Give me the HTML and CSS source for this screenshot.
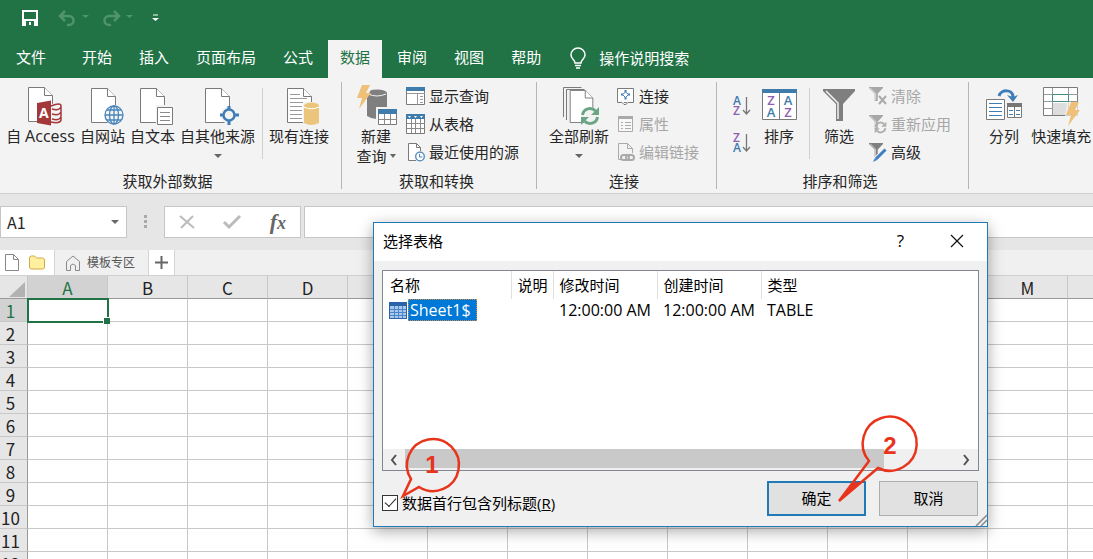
FILE: index.html
```html
<!DOCTYPE html>
<html lang="zh-CN">
<head>
<meta charset="utf-8">
<title>Excel</title>
<link rel="stylesheet" href="styles.css">
</head>
<body>
<svg class="defs" aria-hidden="true">
  <symbol id="doc" viewBox="0 0 25 35"><path d="M.5.500h16l8 8v26H.5z" fill="#fff" stroke="#7a7a7a"/><path d="M16.500.500v8h8" fill="#fff" stroke="#7a7a7a"/></symbol>
  <symbol id="bolt" viewBox="0 0 14 24"><path d="M5 0h8L9 8h5L2 24 5 13H0z" fill="#eec078"/></symbol>
  <symbol id="cycle" viewBox="0 0 20 20"><path d="M2.500 9a7.500 7.500 0 0 1 13-4M17.500 11a7.500 7.500 0 0 1-13 4" fill="none" stroke="currentColor" stroke-width="3"/><path d="M19 1v8h-8zM1 19v-8h8z" fill="currentColor"/></symbol>
  <symbol id="funnel" viewBox="0 0 32 32"><path d="M0 0h32v2L20 15v17h-7V15L0 2z" fill="#7f7f7f"/><path d="M3 2l12 12v16" fill="none" stroke="#f3f3f3" stroke-width="1.500"/></symbol>
</svg>

<div class="app">
  <header class="titlebar">
    <button class="qat save" aria-label="保存"><svg width="16" height="16"><path d="M0 0h16v16H0z" fill="#fff"/><path d="M2 2h12v7H2zM4 11h8v5H4z" fill="#217346"/><path d="M7 12h2v3H7z" fill="#fff"/></svg></button>
    <button class="qat undo" aria-label="撤销"><svg width="32" height="16"><path d="M7 1L2 6l5 5M2 6h9a4 4 0 0 1 0 9h-2" fill="none" stroke="#4f946d" stroke-width="2.500"/><path d="M24 5h7l-3.500 3z" fill="#4f946d"/></svg></button>
    <button class="qat redo" aria-label="恢复"><svg width="32" height="16"><path d="M12 1l5 5-5 5M17 6H7a4 4 0 0 0 0 9h2" fill="none" stroke="#4f946d" stroke-width="2.500"/><path d="M24 5h7l-3.500 3z" fill="#4f946d"/></svg></button>
    <button class="qat" aria-label="自定义快速访问工具栏"><svg width="7" height="8"><path d="M1 1h5" stroke="#fff"/><path d="M0 4h7L3.500 7z" fill="#fff"/></svg></button>
  </header>

  <nav class="tabs">
    <button class="tab file">文件</button>
    <button class="tab">开始</button>
    <button class="tab">插入</button>
    <button class="tab">页面布局</button>
    <button class="tab">公式</button>
    <button class="tab active">数据</button>
    <button class="tab">审阅</button>
    <button class="tab">视图</button>
    <button class="tab">帮助</button>
    <button class="tell"><svg width="16" height="21"><path d="M5 15c0-3-4-4-4-8a7 7 0 0 1 14 0c0 4-4 5-4 8z" fill="none" stroke="#fff" stroke-width="1.500"/><path d="M5 17.500h6M6 20h4" stroke="#fff" stroke-width="1.500"/></svg>操作说明搜索</button>
  </nav>

  <section class="ribbon">
    <div class="group near">
      <div class="controls">
        <button class="large access"><svg width="44" height="42"><use href="#doc" x="9" y="3" width="25" height="35"/><path d="M29 20h11q4 0 4 3v13q0 4-5 4H29z" fill="#f3f3f3"/><g fill="none" stroke="#a4373a" stroke-width="1.500"><path d="M32 22q10-4 10 0v14q-1 4-10 2M33 25q7 2 9-2M33 30q7 2 9-2M33 35q7 2 9-2"/></g><path d="M18 19l14-2.500v25L18 39z" fill="#a4373a"/><text x="20" y="34" font-size="14" font-weight="700" fill="#fff">A</text></svg><span>自 <span class="latin">Access</span></span></button>
        <button class="large"><svg width="44" height="42"><use href="#doc" x="10" y="4" width="25" height="35"/><circle cx="33" cy="31" r="10" fill="#f3f3f3"/><g fill="none" stroke="#4a86bd" stroke-width="1.300"><circle cx="33" cy="31" r="9"/><ellipse cx="33" cy="31" rx="4.500" ry="9"/><path d="M33 22v18M24 31h18M26 26h14M26 36h14"/></g></svg><span>自网站</span></button>
        <button class="large"><svg width="44" height="42"><use href="#doc" x="9" y="4" width="25" height="35"/><path d="M25 21h17v20H25z" fill="#f3f3f3"/><path d="M26.500 23.500h15v17h-15z" fill="#fff" stroke="#7a7a7a"/><path d="M29 28.500h10M29 32.500h10M29 36.500h10" stroke="#8a8a8a"/></svg><span>自文本</span></button>
        <button class="large"><svg width="44" height="42"><use href="#doc" x="9" y="4" width="25" height="35"/><circle cx="33" cy="31" r="9" fill="#f3f3f3"/><circle cx="33" cy="31" r="5.500" fill="#f3f3f3" stroke="#3e7db8" stroke-width="2.500"/><path d="M33 22v4M33 36v5M24 31h4M38 31h5" stroke="#3e7db8" stroke-width="3"/></svg><span>自其他来源</span><i class="arrow"></i></button>
        <div class="rule"></div>
        <button class="large"><svg width="44" height="42"><use href="#doc" x="10" y="4" width="25" height="35"/><path d="M13 10.500h10M13 14.500h17M13 18.500h15M13 22.500h12M13 26.500h12M13 30.500h12M13 34.500h12" stroke="#999"/><path d="M26 18h17v23H26z" fill="#f3f3f3"/><path d="M27 22v17q7 4 15 0V22z" fill="#ecc57c"/><ellipse cx="34.500" cy="21.500" rx="7.500" ry="3" fill="#ecc57c"/><path d="M27 23q7 3.500 15 0" fill="none" stroke="#fff"/></svg><span>现有连接</span></button>
      </div>
      <div class="caption">获取外部数据</div>
    </div>

    <div class="group">
      <div class="controls">
        <button class="large"><svg width="44" height="42"><path d="M13 9v23q9 6 20 0V9z" fill="#7f7f7f"/><ellipse cx="23" cy="9" rx="10" ry="3.500" fill="#7f7f7f"/><path d="M14 10q9 4 18 0" fill="none" stroke="#f3f3f3"/><path d="M13 3h5L9 22l-1-6z" fill="#f3f3f3"/><use href="#bolt" x="3" y="1" width="14" height="24"/><path d="M22 23h22v19H22z" fill="#f3f3f3"/><path d="M24.500 25.500h18v15h-18z" fill="#fff" stroke="#7a7a7a"/><path d="M24 25h19v5H24z" fill="#3f7cac"/><path d="M30.500 30v11M36.500 30v11M25 35.500h18" stroke="#8a8a8a"/></svg><span>新建</span><span class="second">查询<i class="arrow inline"></i></span></button>
        <div class="stack">
          <button class="small"><svg width="19" height="20"><path d="M.5 1.500h18v17H.5z" fill="#fff" stroke="#7a7a7a"/><path d="M0 1h19v4H0z" fill="#3f7cac"/><path d="M1 7.500h18M11.500 8v11M14 10.500h3M14 13.500h3M14 16.500h3" stroke="#999"/></svg>显示查询</button>
          <button class="small"><svg width="19" height="20"><path d="M.5 1.500h18v18H.5z" fill="#fff" stroke="#7a7a7a"/><path d="M0 0h19v5H0z" fill="#3f7cac"/><path d="M2 2h3L3.500 4zM8 2h3L9.500 4zM14 2h3l-1.500 2z" fill="#fff"/><path d="M5.500 5v14M9.500 5v14M14.500 5v14M1 9.500h18M1 14.500h18" stroke="#8a8a8a"/></svg>从表格</button>
          <button class="small"><svg width="19" height="20"><path d="M2.500 1.500h8l4 4v13h-12z" fill="#fff" stroke="#7a7a7a"/><path d="M10.500 1.500v4h4" fill="none" stroke="#7a7a7a"/><circle cx="14" cy="14.500" r="5.500" fill="#f3f3f3"/><circle cx="14" cy="14.500" r="4.300" fill="#fff" stroke="#4a86bd" stroke-width="1.300"/><path d="M13.500 12v3h3" fill="none" stroke="#4a86bd"/></svg>最近使用的源</button>
        </div>
      </div>
      <div class="caption">获取和转换</div>
    </div>

    <div class="group">
      <div class="controls">
        <button class="large"><svg width="44" height="42"><path d="M6.500 33V3.500h18M9.500 36V5.500h18" fill="none" stroke="#7a7a7a"/><use href="#doc" x="12" y="6" width="25" height="33"/><circle cx="33" cy="32" r="9" fill="#f3f3f3"/><g color="#6ba585"><use href="#cycle" x="23" y="22" width="20" height="20"/></g></svg><span>全部刷新</span><i class="arrow"></i></button>
        <div class="stack">
          <button class="small"><svg width="18" height="20"><path d="M.5 2.500h16v14H.5z" fill="#fff" stroke="#7a7a7a"/><path d="M8.500 4v2.500M8.500 11v2.500M4 8.500h2M11 8.500h2" stroke="#3e7db8" stroke-width="2"/><path d="M8.500 6l3 2.500-3 3-3-3z" fill="#fff" stroke="#3e7db8"/><path d="M2 16.500h5M10 16.500h5" stroke="#f3f3f3" stroke-width="4"/><path d="M1 16.500h4l2 2h2l2-2h5" fill="none" stroke="#7a7a7a"/></svg>连接</button>
          <button class="small" disabled><svg width="18" height="20"><path d="M1.500 2.500h14v15h-14z" fill="#f8f8f8" stroke="#aaa"/><path d="M1 2h15v3H1z" fill="#aaa"/><path d="M4 8.500h2M8 8.500h6M4 11.500h2M8 11.500h6M4 14.500h2M8 14.500h6" stroke="#aaa"/></svg>属性</button>
          <button class="small" disabled><svg width="18" height="20"><path d="M4 17.500H1.500v-16h9l5 5V11M10.500 1.500v5h5" fill="none" stroke="#aaa"/><rect x="4" y="13" width="8" height="5" rx="2.500" fill="none" stroke="#aaa" stroke-width="2"/><rect x="9" y="13" width="8" height="5" rx="2.500" fill="none" stroke="#aaa" stroke-width="2"/></svg>编辑链接</button>
        </div>
      </div>
      <div class="caption">连接</div>
    </div>

    <div class="group">
      <div class="controls">
        <div class="sorts">
          <button aria-label="升序"><svg width="20" height="22"><g font-size="12" font-weight="600"><text x="4" y="10" fill="#3f7cac">A</text><text x="4" y="20" fill="#8e5fb0">Z</text></g><path d="M17.500 2v16M14 15l3.500 4 3.500-4" fill="none" stroke="#777" stroke-width="1.300"/></svg></button>
          <button aria-label="降序"><svg width="20" height="22"><g font-size="12" font-weight="600"><text x="4" y="10" fill="#8e5fb0">Z</text><text x="4" y="20" fill="#3f7cac">A</text></g><path d="M17.500 2v16M14 15l3.500 4 3.500-4" fill="none" stroke="#777" stroke-width="1.300"/></svg></button>
        </div>
        <button class="large"><svg width="44" height="42"><path d="M5.500 5.500h34v30h-34z" fill="#fff" stroke="#7a7a7a"/><path d="M5 5h35v4H5z" fill="#3f7cac"/><path d="M22.500 9v26" stroke="#7a7a7a"/><g font-size="13" font-weight="600" text-anchor="middle"><text x="14" y="21" fill="#8e5fb0">Z</text><text x="14" y="33" fill="#3f7cac">A</text><text x="31" y="21" fill="#3f7cac">A</text><text x="31" y="33" fill="#8e5fb0">Z</text></g></svg><span>排序</span></button>
        <div class="rule tight"></div>
        <button class="large"><svg width="44" height="42"><use href="#funnel" x="6" y="5" width="32" height="32"/></svg><span>筛选</span></button>
        <div class="stack">
          <button class="small" disabled><svg width="18" height="20"><g opacity=".65"><use href="#funnel" x="0" y="1" width="14" height="14"/></g><path d="M10 10l7 8M17 10l-7 8" stroke="#aaa" stroke-width="2"/></svg>清除</button>
          <button class="small" disabled><svg width="18" height="20"><g opacity=".65"><use href="#funnel" x="0" y="1" width="14" height="14"/></g><g color="#b0b0b0"><use href="#cycle" x="5" y="7" width="13" height="13"/></g></svg>重新应用</button>
          <button class="small"><svg width="18" height="20"><use href="#funnel" x="0" y="1" width="14" height="14"/><path d="M6 18l10-10" stroke="#f3f3f3" stroke-width="5"/><path d="M7 17l9.500-9.500" stroke="#3f7cc0" stroke-width="3"/><path d="M4 20l2-4 2 2z" fill="#3f7cc0"/></svg>高级</button>
        </div>
      </div>
      <div class="caption">排序和筛选</div>
    </div>

    <div class="group near last">
      <div class="controls">
        <button class="large"><svg width="44" height="42"><path d="M4.500 15.500h18v20h-18z" fill="#fff" stroke="#7a7a7a"/><path d="M7 19.500h13M7 23.500h13M7 27.500h13M7 31.500h13" stroke="#3e7db8"/><path d="M25.500 19.500h14v14h-14z" fill="#fff" stroke="#7a7a7a"/><path d="M25 19h15v4H25z" fill="#777"/><path d="M32.500 23v11" stroke="#777"/><path d="M27 26.500h4M27 30.500h4M34 26.500h4M34 30.500h4" stroke="#3e7db8"/><path d="M17 12c2-7 14-7 14 1" fill="none" stroke="#3e7db8" stroke-width="3"/><path d="M25 11l6 7 5-7-5 2z" fill="#3e7db8"/></svg><span>分列</span></button>
        <button class="large"><svg width="44" height="42"><path d="M4.500 3.500h34v28h-34z" fill="#fff" stroke="#7a7a7a"/><path d="M13 19h17v12H13z" fill="#ddd"/><path d="M13.500 4v27M29.500 4v27M5 10.500h34M5 17.500h34M5 24.500h8" stroke="#999"/><path d="M13.500 10.500h16v7h-16z" fill="#fff" stroke="#448d83"/><path d="M28 18h14v14H26z" fill="#f3f3f3" opacity=".7"/><use href="#bolt" x="27" y="18" width="14" height="24"/></svg><span>快速填充</span></button>
      </div>
    </div>
  </section>

  <section class="formulabar">
    <div class="namebox"><input aria-label="名称框" value="A1"><button aria-label="名称列表"><i class="arrow"></i></button></div>
    <svg class="grip" width="3" height="14"><path d="M0 0h3v3H0zM0 5h3v3H0zM0 10h3v3H0z" fill="#aaa"/></svg>
    <div class="fxbox">
      <button aria-label="取消输入"><svg width="16" height="14"><path d="M1 1l14 12M14 1L2 13" stroke="#bbb" stroke-width="2"/></svg></button>
      <button aria-label="输入"><svg width="18" height="14"><path d="M1 7l5 5L17 1" fill="none" stroke="#bbb" stroke-width="3"/></svg></button>
      <button class="fx" aria-label="插入函数">f<small>x</small></button>
    </div>
    <input class="formula" aria-label="编辑栏">
  </section>

  <section class="filetabs">
    <div class="quick">
      <button aria-label="新建"><svg width="14" height="17"><path d="M.5.500h8l5 5v11H.5zM8.500.500v5h5" fill="#fff" stroke="#888"/></svg></button>
      <button aria-label="打开"><svg width="18" height="15"><path d="M1.500 3q0-2 2-2h3l2 2h6q2 0 2 2v7q0 2-2 2h-11q-2 0-2-2z" fill="#fff0a0" stroke="#d2aa48"/></svg></button>
    </div>
    <button class="filetab"><svg width="16" height="16"><path d="M1.500 15.500v-9L8 1l6.500 5.500v9h-4v-5q-2.500-3-5 0v5z" fill="none" stroke="#888"/></svg>模板专区</button>
    <button class="plus" aria-label="新标签"><svg width="13" height="13"><path d="M6.500 0v13M0 6.500h13" stroke="#666" stroke-width="2"/></svg></button>
  </section>

  <main class="sheet">
    <table class="grid">
      <thead><tr><th class="corner"><svg width="16" height="15"><path d="M16 0v15H0z" fill="#b2b2b2"/></svg></th><th class="sel">A</th><th>B</th><th>C</th><th>D</th><th></th><th></th><th></th><th></th><th></th><th></th><th></th><th></th><th>M</th><th></th></tr></thead>
      <tbody>
        <tr><th class="sel">1</th><td class="cursor"></td><td></td><td></td><td></td><td></td><td></td><td></td><td></td><td></td><td></td><td></td><td></td><td></td><td></td></tr>
        <tr><th>2</th><td></td><td></td><td></td><td></td><td></td><td></td><td></td><td></td><td></td><td></td><td></td><td></td><td></td><td></td></tr>
        <tr><th>3</th><td></td><td></td><td></td><td></td><td></td><td></td><td></td><td></td><td></td><td></td><td></td><td></td><td></td><td></td></tr>
        <tr><th>4</th><td></td><td></td><td></td><td></td><td></td><td></td><td></td><td></td><td></td><td></td><td></td><td></td><td></td><td></td></tr>
        <tr><th>5</th><td></td><td></td><td></td><td></td><td></td><td></td><td></td><td></td><td></td><td></td><td></td><td></td><td></td><td></td></tr>
        <tr><th>6</th><td></td><td></td><td></td><td></td><td></td><td></td><td></td><td></td><td></td><td></td><td></td><td></td><td></td><td></td></tr>
        <tr><th>7</th><td></td><td></td><td></td><td></td><td></td><td></td><td></td><td></td><td></td><td></td><td></td><td></td><td></td><td></td></tr>
        <tr><th>8</th><td></td><td></td><td></td><td></td><td></td><td></td><td></td><td></td><td></td><td></td><td></td><td></td><td></td><td></td></tr>
        <tr><th>9</th><td></td><td></td><td></td><td></td><td></td><td></td><td></td><td></td><td></td><td></td><td></td><td></td><td></td><td></td></tr>
        <tr><th>10</th><td></td><td></td><td></td><td></td><td></td><td></td><td></td><td></td><td></td><td></td><td></td><td></td><td></td><td></td></tr>
        <tr><th>11</th><td></td><td></td><td></td><td></td><td></td><td></td><td></td><td></td><td></td><td></td><td></td><td></td><td></td><td></td></tr>
        <tr><th>12</th><td></td><td></td><td></td><td></td><td></td><td></td><td></td><td></td><td></td><td></td><td></td><td></td><td></td><td></td></tr>
      </tbody>
    </table>
  </main>
</div>

<div class="dialog" role="dialog" aria-labelledby="dlg-title">
  <div class="dlg-head">
    <h1 id="dlg-title">选择表格</h1>
    <button class="help" aria-label="帮助">?</button>
    <button class="close" aria-label="关闭"><svg width="14" height="14"><path d="M1 1l12 12M13 1L1 13" stroke="#111" stroke-width="1.200"/></svg></button>
  </div>
  <div class="dlg-body">
    <div class="list">
      <table class="sources">
        <colgroup><col class="c-name"><col class="c-desc"><col class="c-time"><col class="c-time"><col></colgroup>
        <thead><tr><th>名称</th><th>说明</th><th>修改时间</th><th>创建时间</th><th>类型</th></tr></thead>
        <tbody><tr><td class="name"><div class="entry"><svg width="18" height="17"><path d="M0 0h18v17H0z" fill="#2c62a8"/><path d="M1 4h16v12H1z" fill="#a9c8ec"/><path d="M5.500 4v12M9.500 4v12M13.500 4v12M1 7.500h16M1 10.500h16M1 13.500h16" stroke="#4d86c8"/></svg><span class="picked">Sheet1$</span></div></td><td></td><td>12:00:00 AM</td><td>12:00:00 AM</td><td>TABLE</td></tr></tbody>
      </table>
      <div class="scroll">
        <button aria-label="向左滚动"><svg width="8" height="12"><path d="M6 1L2 6l4 5" fill="none" stroke="#505050" stroke-width="2"/></svg></button>
        <div class="track"><div class="thumb"></div></div>
        <button aria-label="向右滚动"><svg width="8" height="12"><path d="M1 1l4 5-4 5" fill="none" stroke="#505050" stroke-width="2"/></svg></button>
      </div>
    </div>
    <div class="dlg-foot">
      <label class="check"><input type="checkbox" checked><span>数据首行包含列标题(<u>R</u>)</span></label>
      <button class="btn primary">确定</button>
      <button class="btn">取消</button>
    </div>
  </div>
  <svg class="resize" width="12" height="12"><path d="M1 12L12 1M6 12l6-6" stroke="#888" stroke-width="1.500"/></svg>
  <svg class="callout one" width="62" height="64"><path d="M12 42A26 26 0 1 1 20 50L4 59z" fill="none" stroke="#e8341c" stroke-width="2.500"/><text x="33" y="36" text-anchor="middle">1</text></svg>
  <svg class="callout two" width="86" height="90"><path d="M34 45A27 27 0 1 1 43 52L4 85z" fill="none" stroke="#e8341c" stroke-width="2.500"/><path d="M4 85l13-18 8-1z" fill="#e8341c"/><text x="55" y="38" text-anchor="middle">2</text></svg>
</div>
</body>
</html>
```

FILE: styles.css
```css
* { box-sizing: border-box; }

body {
  margin: 0;
  font: 15px/20px "Open Sans", "Noto Sans CJK SC", sans-serif;
  color: #262626;
  background: #fff;
}

button, input {
  font: inherit;
  color: inherit;
  margin: 0;
  padding: 0;
  border: 0;
  background: none;
}

button { white-space: nowrap; }
svg { display: block; flex: none; overflow: visible; }
.defs { position: absolute; width: 0; height: 0; }

.app {
  height: 100vh;
  display: flex;
  flex-direction: column;
  overflow: hidden;
}

.arrow {
  display: block;
  border: 4px solid transparent;
  border-top-color: #666;
  border-bottom: 0;
}

/* Title bar and tabs */
.titlebar {
  flex: none;
  height: 40px;
  padding: 0 22px 4px;
  display: flex;
  align-items: center;
  background: #217346;
}
.qat.save { margin-right: 20px; }
.qat.undo { margin-right: 12px; }
.qat.redo { margin-right: 18px; }

.tabs {
  flex: none;
  height: 38px;
  padding: 0 4px;
  display: flex;
  gap: 3px;
  background: #217346;
  color: #fff;
}
.tab { padding: 0 12px 4px; }
.tab.file { margin-right: 9px; }
.tab.active { background: #f3f3f3; color: #217346; }
.tell {
  display: flex;
  align-items: center;
  gap: 13px;
  margin-left: 14px;
  padding-bottom: 2px;
}

/* Ribbon */
.ribbon {
  flex: none;
  display: flex;
  background: #f3f3f3;
  border-bottom: 1px solid #d0d0d0;
}
.group {
  flex: none;
  display: flex;
  flex-direction: column;
  margin: 4px 0;
  padding: 0 17px 0 12px;
  border-right: 1px solid #b5b5b5;
}
.group.near { padding: 0 12px 0 6px; }
.group.last { padding-left: 13px; border: 0; }
.controls { display: flex; gap: 8px; height: 91px; }
.near .controls { gap: 5px; }
.caption { line-height: 16px; text-align: center; }
.large {
  display: flex;
  flex-direction: column;
  align-items: center;
  padding-top: 2px;
}
.large.access { width: 69px; }
.latin { font-size: 16px; }
.large .arrow { margin-top: 8px; }
.large .second { display: flex; align-items: center; gap: 3px; }
.large .arrow.inline { margin: 0; border-width: 4px 3px 0; }
.rule { width: 1px; height: 71px; margin: 6px 1px 0 2px; background: #d0d0d0; }
.rule.tight { margin: 6px -1px 0 0; }
.stack { display: flex; flex-direction: column; }
.small {
  display: flex;
  align-items: center;
  gap: 4px;
  height: 28px;
}
.small:disabled { color: #a6a6a6; }
.sorts { display: flex; flex-direction: column; padding-top: 5px; }
.sorts button { height: 37px; }

/* Formula bar */
.formulabar {
  flex: none;
  display: flex;
  align-items: center;
  padding: 12px 0;
  background: #e6e6e6;
}
.namebox, .fxbox, .formula {
  height: 32px;
  background: #fff;
  border: 1px solid #c6c6c6;
}
.namebox {
  width: 127px;
  display: flex;
  align-items: center;
  padding: 0 7px 0 6px;
}
.namebox input { flex: 1; min-width: 0; font: 16px/20px "Noto Sans CJK SC", sans-serif; }
.grip { margin: 0 17px; }
.fxbox {
  width: 137px;
  display: flex;
  align-items: center;
  justify-content: space-between;
  padding: 0 14px;
  margin-right: 3px;
}
.fx { font: italic 700 22px/24px "Liberation Serif", serif; color: #666; }
.fx small { font-size: 18px; }
.formula { flex: 1; min-width: 0; border-right: 0; }

/* Document tabs */
.filetabs {
  flex: none;
  display: flex;
  height: 25px;
  background: #f0f0f0;
}
.quick {
  display: flex;
  align-items: center;
  gap: 9px;
  width: 55px;
  padding-left: 5px;
  background: #fff;
  border-right: 1px solid #d4d4d4;
}
.filetab {
  display: flex;
  align-items: center;
  gap: 6px;
  padding: 0 13px 0 10px;
  font-size: 12px;
  color: #555;
}
.plus {
  display: flex;
  align-items: center;
  justify-content: center;
  width: 27px;
  background: #fff;
  border: solid #d4d4d4;
  border-width: 0 1px;
}

/* Sheet */
.sheet { flex: 1; min-height: 0; overflow: hidden; }
.grid {
  width: 1148px;
  table-layout: fixed;
  border-collapse: separate;
  border-spacing: 0;
}
.grid th, .grid td {
  height: 23px;
  padding: 0;
  border: solid #c8c8c8;
  border-width: 0 1px 1px 0;
}
.grid th {
  padding-top: 2px;
  font: 17px/20px "Noto Sans CJK SC", sans-serif;
  color: #222;
  background: #e6e6e6;
}
.grid thead th { height: 24px; border-bottom-color: #999; border-top: 1px solid #d0d0d0; }
.grid tbody th { border-right-color: #999; padding-right: 6px; }
.grid .sel { background: #d2d2d2; color: #217346; }
.grid .corner { width: 28px; padding: 4px 3px 0 9px; }
.grid .cursor { outline: 2px solid #217346; outline-offset: -1px; position: relative; }
.grid .cursor::after {
  content: "";
  position: absolute;
  right: -3px;
  bottom: -3px;
  width: 6px;
  height: 6px;
  background: #217346;
  border: solid #fff;
  border-width: 1px 0 0 1px;
}

/* Dialog */
.dialog {
  position: absolute;
  left: 373px;
  top: 222px;
  width: 615px;
  background: #f0f0f0;
  border: 1px solid #1f7ab5;
  box-shadow: 0 4px 14px rgba(0, 0, 0, .35);
  color: #000;
}
.dlg-head {
  display: flex;
  align-items: center;
  height: 38px;
  padding: 0 23px 2px 9px;
  background: #fff;
}
.dlg-head h1 { flex: 1; margin: 0; font-size: 15px; font-weight: 400; }
.help { margin-right: 46px; font-size: 17px; }
.dlg-body { padding: 9px 8px 10px; }
.list {
  display: flex;
  flex-direction: column;
  height: 201px;
  background: #fff;
  border: 1px solid #828790;
}
.sources { width: 100%; table-layout: fixed; border-collapse: collapse; }
.c-name { width: 128px; }
.c-desc { width: 42px; }
.c-time { width: 104px; }
.sources th {
  height: 28px;
  padding: 0 0 0 6px;
  font-weight: 400;
  text-align: left;
  border-right: 1px solid #e0e0e0;
  white-space: nowrap;
}
.sources th:first-child { padding-left: 7px; }
.sources th:last-child { border: 0; }
.sources td { height: 22px; padding: 0 0 0 6px; font-size: 16px; white-space: nowrap; }
.entry { display: flex; align-items: center; gap: 1px; }
.picked {
  padding: 0 5px 0 1px;
  color: #fff;
  background: #0078d7;
  border: 1px dotted #d08a45;
}
.scroll { display: flex; margin-top: auto; height: 21px; background: #f0f0f0; }
.scroll button { width: 22px; display: flex; align-items: center; justify-content: center; }
.track { flex: 1; }
.thumb { width: 87%; height: 19px; background: #c9c9c9; }
.dlg-foot {
  display: flex;
  align-items: center;
  gap: 13px;
  padding: 10px 1px 0 0;
}
.check { flex: 1; display: flex; align-items: center; gap: 4px; padding-top: 8px; }
.check input {
  appearance: none;
  width: 16px;
  height: 16px;
  border: 1px solid #333;
  background: #fff;
  display: grid;
  place-items: center;
}
.check input:checked::after {
  content: "";
  width: 10px;
  height: 5px;
  border: solid #222;
  border-width: 0 0 1px 1px;
  transform: translateY(-2px) rotate(-48deg);
}
.btn {
  width: 99px;
  height: 35px;
  padding-bottom: 2px;
  background: #e1e1e1;
  border: 1px solid #adadad;
}
.btn.primary { border: 2px solid #1f7ab5; }
.resize { position: absolute; right: 0; bottom: 0; }
.callout { position: absolute; font: 700 24px "Liberation Sans", sans-serif; fill: #e8341c; }
.callout.one { left: 25px; top: 214px; }
.callout.two { left: 461px; top: 193px; }
```
